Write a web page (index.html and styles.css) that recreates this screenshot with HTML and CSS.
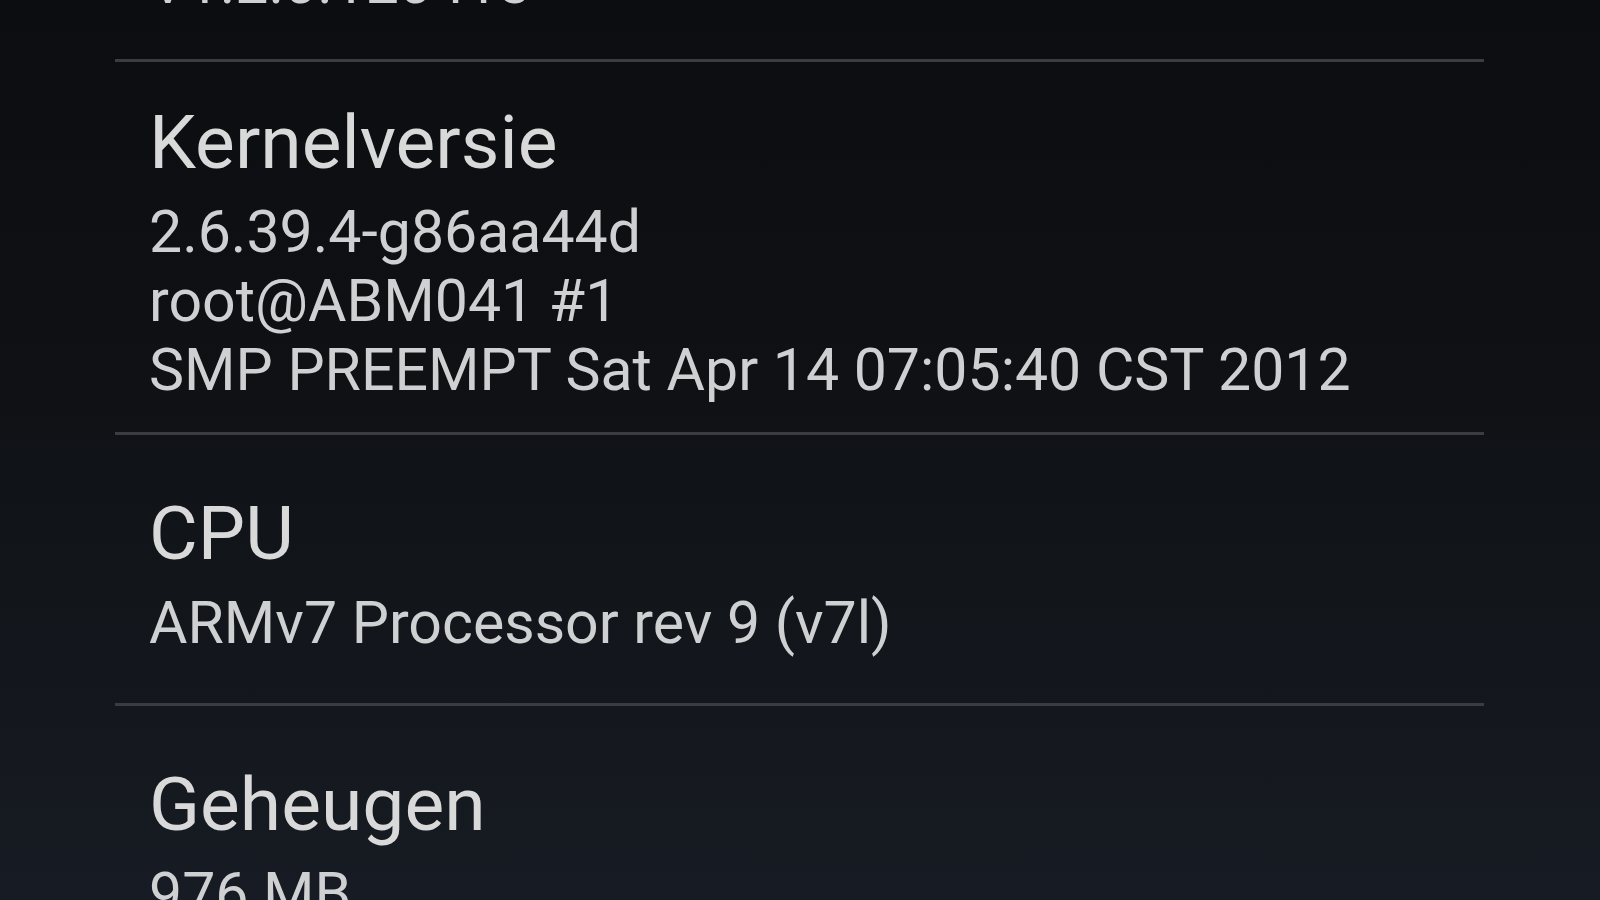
FILE: index.html
```html
<!DOCTYPE html>
<html lang="nl">
<head>
  <meta charset="UTF-8">
  <meta name="viewport" content="width=device-width, initial-scale=1.0">
  <title>Over de telefoon</title>
  <link rel="stylesheet" href="styles.css">
</head>
<body>

  <div class="prefs">
    <!-- scrolled list: only the bottom of the baseband item is still on screen -->
    <div class="pref cut">
      <div class="pref-title">Basebandversie</div>
      <div class="pref-summary">
        <span>V1.2.0.120413</span>
      </div>
    </div>

    <div class="pref">
      <div class="pref-title">Kernelversie</div>
      <div class="pref-summary">
        <span>2.6.39.4-g86aa44d</span>
        <span>root@ABM041 #1</span>
        <span>SMP PREEMPT Sat Apr 14 07:05:40 CST 2012</span>
      </div>
    </div>

    <div class="pref">
      <div class="pref-title">CPU</div>
      <div class="pref-summary">
        <span>ARMv7 Processor rev 9 (v7l)</span>
      </div>
    </div>

    <div class="pref">
      <div class="pref-title">Geheugen</div>
      <div class="pref-summary">
        <span>976 MB</span>
      </div>
    </div>
  </div>

</body>
</html>
```

FILE: styles.css
```css
* {
  margin: 0;
  padding: 0;
  box-sizing: border-box;
}
html, body {
  height: 100%;
}
body {
  font-family: Roboto, 'Noto Sans', sans-serif;
  background: linear-gradient(to bottom, #0b0d10 0%, #0e1013 35%, #12151a 65%, #171b23 100%);
  color: #d2d2d3;
  overflow: hidden;
}
.prefs {
  margin: 0 116px 0 115px;
}
.pref {
  display: flex;
  flex-direction: column;
  justify-content: center;
  min-height: 271px;
  padding: 36px 0 28px 34px;
  border-bottom: 3px solid #3a3c3f;
}
.pref.cut {
  min-height: 0;
  padding-bottom: 42px;
  margin-top: -187px;
}
.pref-title {
  font-size: 75px;
  line-height: 88px;
  color: #d9d9da;
  white-space: nowrap;
}
.pref-summary {
  margin-top: 11px;
  font-size: 59px;
  line-height: 69px;
  color: #cfd0d1;
}
.pref-summary span {
  display: block;
  white-space: nowrap;
}
```
